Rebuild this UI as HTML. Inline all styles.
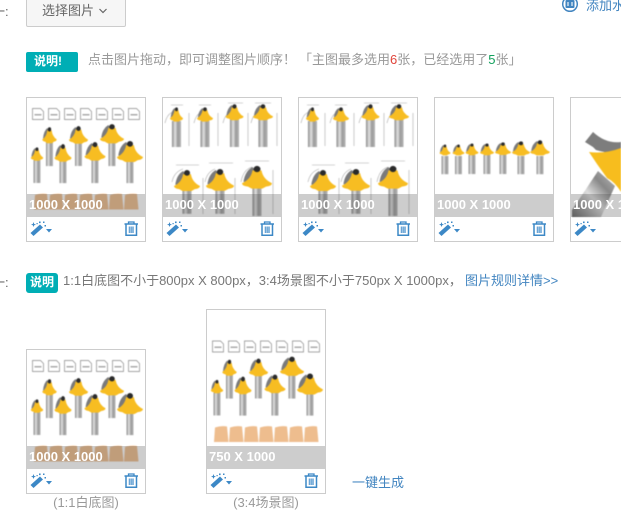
<!DOCTYPE html>
<html lang="zh"><head><meta charset="utf-8"><title>选择图片</title>
<style>
html,body{margin:0;padding:0;background:#fff;width:621px;height:521px;overflow:hidden}
body{position:relative;font-family:"Liberation Sans","Noto Sans CJK SC",sans-serif;font-size:13px;color:#999}
.a{position:absolute;white-space:nowrap;line-height:18px;filter:blur(.25px)}
.btn{position:absolute;left:26px;top:-5px;width:98px;height:30px;border:1px solid #ccc;border-radius:2px;background:#f6f6f6;color:#666;font-size:13px;line-height:30px;text-indent:15px}
.badge{position:absolute;background:#00aeb5;color:#fff;font-weight:bold;font-size:12px;border-radius:2px;height:20px;line-height:19px}
.card{position:absolute;width:118px;border:1px solid #ccc;background:#fff;overflow:hidden}
.card svg.im{position:absolute;left:0;top:0;filter:blur(.4px)}
.bar{position:absolute;left:0;width:118px;height:23px;background:rgba(70,70,70,.27);color:#fff;font-weight:bold;font-size:13px;line-height:21px;text-indent:2px}
.tools{position:absolute;left:0;bottom:0;width:118px;height:24px}
.w{position:absolute;left:3px;top:4px}
.t{position:absolute;left:97px;top:4px}
.lk{color:#4285c0}
</style></head>
<body>
<svg width="0" height="0" style="position:absolute">
<defs>
<linearGradient id="gs" x1="0" x2="1" y1="0" y2="0"><stop offset="0" stop-color="#8a8a8a"/><stop offset=".35" stop-color="#e2e2e2"/><stop offset=".65" stop-color="#999"/><stop offset="1" stop-color="#b8b8b8"/></linearGradient>
<linearGradient id="gd" x1="0" x2="1" y1="1" y2="0"><stop offset="0" stop-color="#666"/><stop offset=".45" stop-color="#ddd"/><stop offset=".7" stop-color="#888"/><stop offset="1" stop-color="#bbb"/></linearGradient>
<g id="hd">
<path d="M-9 11Q-8 3-3 0L-1 3Q-5 6-5.500 11Z" fill="#7a7a7a"/>
<path d="M-3 2.500L3 2.500Q4 9 10 12Q10 14 6 14.500L3.500 16H-3.500L-6 14.500Q-10 14-10 12Q-4 9-3 2.500Z" fill="#f7bd22"/>
<circle cx="0" cy="1.500" r="2.300" fill="#2a2a2a"/>
</g>
<rect id="sh" x="-3.500" y="0" width="7" height="28" fill="url(#gs)"/>
<g id="bx"><path d="M.5.500H8.500L11.500 3.500V11.500H.5Z" fill="#fff" stroke="#888" stroke-width=".7"/><rect x="2.500" y="6" width="7" height="1.500" fill="#aaa"/></g>
<path id="wd" d="M1 2Q7 0 13 1L14.500 16.500H0Z" fill="#eebd8e"/>
<g id="seven">
<use href="#bx" x="5" y="10"/><use href="#bx" x="21" y="10"/><use href="#bx" x="37" y="10"/><use href="#bx" x="53" y="10"/><use href="#bx" x="69" y="10"/><use href="#bx" x="85" y="10"/><use href="#bx" x="101" y="10"/>
<use href="#sh" transform="translate(10,62) scale(1,.82)"/><use href="#hd" transform="translate(10,50) scale(.62,.8)"/>
<use href="#sh" transform="translate(22.500,44) scale(1,.86)"/><use href="#hd" transform="translate(22.500,30) scale(.72,.95)"/>
<use href="#sh" transform="translate(36,63) scale(1,.79)"/><use href="#hd" transform="translate(36,47) scale(.85,1.050)"/>
<use href="#sh" transform="translate(51.500,45) scale(1,.82)"/><use href="#hd" transform="translate(51.500,29) scale(.95,1.050)"/>
<use href="#sh" transform="translate(68,61) scale(1,.86)"/><use href="#hd" transform="translate(68,45) scale(1.050,1.100)"/>
<use href="#sh" transform="translate(85,44) scale(1,.86)"/><use href="#hd" transform="translate(85,27) scale(1.200,1.150)"/>
<use href="#sh" transform="translate(103,63) scale(1,.79)"/><use href="#hd" transform="translate(103,44) scale(1.300,1.250)"/>
<use href="#wd" x="7" y="95"/><use href="#wd" x="22" y="95"/><use href="#wd" x="37" y="95"/><use href="#wd" x="52" y="95"/><use href="#wd" x="67" y="95"/><use href="#wd" x="82" y="95"/><use href="#wd" x="97" y="95"/>
</g>
<g id="dims">
<g fill="none" stroke="#aaa" stroke-width=".6">
<path d="M8 7H20M36 7H48M65 5H80M92 5H108M26 15V48M55 15V48M85 15V48M114 15V48"/>
<path d="M13 67H36M46 65H70M82 63H106M40 80V116M72 80V116M110 72V116"/>
<path d="M2 25Q4 16 10 14M31 25Q33 16 39 14M60 25Q62 16 68 14M88 25Q90 16 96 14"/>
<path d="M9 84Q11 74 20 71M42 84Q44 74 52 71M78 84Q80 72 89 69"/>
</g>
<use href="#sh" transform="translate(13.500,23) scale(1.300,.93)"/><use href="#hd" transform="translate(13.500,10) scale(.65,.85)"/>
<use href="#sh" transform="translate(42,23) scale(1.300,.93)"/><use href="#hd" transform="translate(42,10) scale(.8,.85)"/>
<use href="#sh" transform="translate(71.500,21) scale(1.300,1)"/><use href="#hd" transform="translate(71.500,7) scale(.9,.95)"/>
<use href="#sh" transform="translate(100,21) scale(1.300,1)"/><use href="#hd" transform="translate(100,7) scale(1,.95)"/>
<use href="#sh" transform="translate(24,92) scale(1.300,.85)"/><use href="#hd" transform="translate(24,73) scale(1.300,1.250)"/>
<use href="#sh" transform="translate(57,92) scale(1.300,.85)"/><use href="#hd" transform="translate(57,72) scale(1.400,1.300)"/>
<use href="#sh" transform="translate(94,90) scale(1.300,1)"/><use href="#hd" transform="translate(94,69) scale(1.500,1.350)"/>
</g>
<g id="wand" fill="#3c88c6">
<path d="M.5 12L10 3.500 13 6.500 3.500 15Z"/>
<path d="M1 3.500L2.800 3 3.500 1 4.200 3 6 3.500 4.200 4.200 3.500 6 2.800 4.200Z"/>
<rect x="9" y=".5" width="1.600" height="1.600"/><rect x="14.500" y="4" width="1.500" height="1.500"/><rect x="13" y=".5" width="1.500" height="1.500"/><rect x="6.500" y="2" width="1.200" height="1.200"/>
<path d="M16 8H22L19 11.500Z"/>
</g>
<g id="trash" fill="none" stroke="#3c88c6">
<path d="M.5 3H14" stroke-width="1.500"/>
<path d="M4.500 3V1H10V3" stroke-width="1.300"/>
<path d="M2 3V14.300H12.500V3" stroke-width="1.500"/>
<rect x="4.500" y="5.500" width="5.500" height="6.500" fill="#a9cbe8" stroke="none"/>
<path d="M5.500 5.500V12M7.250 5.500V12M9 5.500V12" stroke-width=".8" stroke="#5b9bd0"/>
</g>
</defs>
</svg>

<div class="a" style="left:-8px;top:3px;color:#666">一:</div>
<div class="btn">选择图片<svg width="8" height="6" style="margin-left:5px;vertical-align:1px"><path d="M.5 1L4 4.500 7.500 1" fill="none" stroke="#666" stroke-width="1.200"/></svg></div>

<svg style="position:absolute;left:561px;top:-4px" width="18" height="18"><circle cx="9" cy="8" r="7.300" fill="none" stroke="#4285c0" stroke-width="1.500"/><rect x="4.500" y="4" width="9" height="8" rx="1" fill="#4285c0"/><path d="M7 6V10M11 6V10" stroke="#fff" stroke-width="1.100"/></svg>
<div class="a lk" style="left:586px;top:-3px;font-size:13px">添加水印</div>

<div class="badge" style="left:26px;top:52px;width:52px;text-indent:8px">说明!</div>
<div class="a" style="left:88px;top:51px">点击图片拖动&#65292;即可调整图片顺序&#65281;</div>
<div class="a" style="left:299px;top:51px">「主图最多选用<span style="color:#e0443a">6</span>张&#65292;已经选用了<span style="color:#12a05c">5</span>张」</div>

<div class="card" style="left:26px;top:97px;height:143px"><svg class="im" width="118" height="119" viewBox="0 0 118 119"><use href="#seven"/></svg><div class="bar" style="top:96px">1000 X 1000</div><div class="tools"><svg class="w" width="24" height="16"><use href="#wand"/></svg><svg class="t" width="15" height="16"><use href="#trash"/></svg></div></div>

<div class="card" style="left:162px;top:97px;height:143px"><svg class="im" width="118" height="119" viewBox="0 0 118 119"><use href="#dims"/></svg><div class="bar" style="top:96px">1000 X 1000</div><div class="tools"><svg class="w" width="24" height="16"><use href="#wand"/></svg><svg class="t" width="15" height="16"><use href="#trash"/></svg></div></div>

<div class="card" style="left:298px;top:97px;height:143px"><svg class="im" width="118" height="119" viewBox="0 0 118 119"><use href="#dims"/></svg><div class="bar" style="top:96px">1000 X 1000</div><div class="tools"><svg class="w" width="24" height="16"><use href="#wand"/></svg><svg class="t" width="15" height="16"><use href="#trash"/></svg></div></div>

<div class="card" style="left:434px;top:97px;height:143px"><svg class="im" width="118" height="119" viewBox="0 0 118 119">
<use href="#sh" transform="translate(10,58) scale(1,.65)"/><use href="#hd" transform="translate(10,47) scale(.55,.65)"/>
<use href="#sh" transform="translate(23.500,58) scale(1,.65)"/><use href="#hd" transform="translate(23.500,47) scale(.6,.65)"/>
<use href="#sh" transform="translate(37,57) scale(1,.68)"/><use href="#hd" transform="translate(37,46) scale(.65,.7)"/>
<use href="#sh" transform="translate(52,57) scale(1,.68)"/><use href="#hd" transform="translate(52,46) scale(.7,.7)"/>
<use href="#sh" transform="translate(68,57) scale(1,.68)"/><use href="#hd" transform="translate(68,45) scale(.8,.75)"/>
<use href="#sh" transform="translate(86,58) scale(1,.65)"/><use href="#hd" transform="translate(86,44) scale(.9,.85)"/>
<use href="#sh" transform="translate(105,58) scale(1,.65)"/><use href="#hd" transform="translate(105,43) scale(.98,.9)"/>
</svg><div class="bar" style="top:96px">1000 X 1000</div><div class="tools"><svg class="w" width="24" height="16"><use href="#wand"/></svg><svg class="t" width="15" height="16"><use href="#trash"/></svg></div></div>

<div class="card" style="left:570px;top:97px;height:143px"><svg class="im" width="118" height="119" viewBox="0 0 118 119">
<path d="M1 112L27 73 44 88 30 119H1Z" fill="url(#gd)"/>
<path d="M14 44L22 34Q35 46 50 44V54Q38 56 25 52L22 49Z" fill="#7d7d7d"/>
<path d="M18 54Q34 56 50 50V94Q44 84 36 80L26 66Z" fill="#f7bd1e"/>
</svg><div class="bar" style="top:96px">1000 X 1000</div><div class="tools"><svg class="w" width="24" height="16"><use href="#wand"/></svg></div></div>

<div class="a" style="left:-8px;top:274px;color:#666">一:</div>
<div class="badge" style="left:26px;top:273px;width:32px;text-align:center;border-radius:3px">说明</div>
<div class="a" style="left:63px;top:272px;color:#777">1:1白底图不小于800px X 800px&#65292;3:4场景图不小于750px X 1000px&#65292;</div>
<div class="a lk" style="left:465px;top:272px">图片规则详情&gt;&gt;</div>

<div class="card" style="left:26px;top:349px;height:143px"><svg class="im" width="118" height="119" viewBox="0 0 118 119"><use href="#seven"/></svg><div class="bar" style="top:96px">1000 X 1000</div><div class="tools"><svg class="w" width="24" height="16"><use href="#wand"/></svg><svg class="t" width="15" height="16"><use href="#trash"/></svg></div></div>

<div class="card" style="left:206px;top:309px;height:183px"><svg class="im" width="118" height="159" viewBox="0 0 118 159"><g transform="translate(0,20.500)"><use href="#seven"/></g></svg><div class="bar" style="top:136px">750 X 1000</div><div class="tools"><svg class="w" width="24" height="16"><use href="#wand"/></svg><svg class="t" width="15" height="16"><use href="#trash"/></svg></div></div>

<div class="a lk" style="left:352px;top:474px;font-size:13px">一键生成</div>
<div class="a" style="left:26px;width:120px;text-align:center;top:494px">(1:1白底图)</div>
<div class="a" style="left:206px;width:120px;text-align:center;top:494px">(3:4场景图)</div>
</body></html>
